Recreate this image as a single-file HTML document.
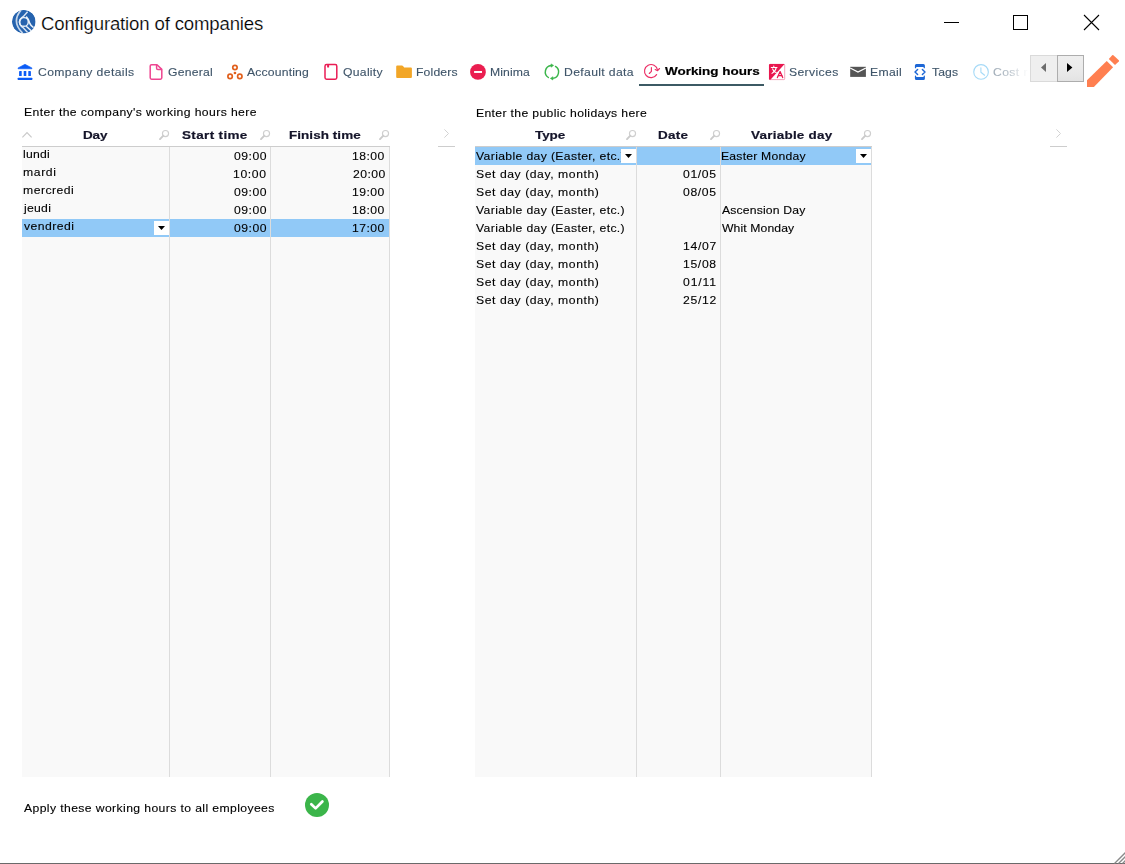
<!DOCTYPE html>
<html><head><meta charset="utf-8">
<style>
html,body{margin:0;padding:0;}
body{width:1125px;height:864px;position:relative;overflow:hidden;background:#fff;font-family:"Liberation Sans",sans-serif;}
.t{position:absolute;white-space:nowrap;transform:scaleX(1.06);transform-origin:0 0;}
.a{position:absolute;}
svg{position:absolute;left:0;top:0;overflow:visible;}
.grid{position:absolute;background:#f9f9f9;}
.vl{position:absolute;width:1px;background:#dcdcdc;}
.hl{position:absolute;height:1px;background:#cdcdcd;}
.sel{position:absolute;background:#91c9f7;height:18px;}
.dd{position:absolute;background:#fff;width:15px;height:14px;}
</style></head><body>

<!-- grids -->
<div class="grid" style="left:22px;top:147px;width:368px;height:630px;"></div>
<div class="grid" style="left:475px;top:147px;width:397px;height:630px;"></div>
<!-- selected rows -->
<div class="sel" style="left:22px;top:219px;width:368px;"></div>
<div class="sel" style="left:475px;top:147px;width:397px;"></div>
<!-- dropdown boxes -->
<!-- column lines -->
<div class="vl" style="left:169px;top:147px;height:630px;"></div>
<div class="vl" style="left:270px;top:147px;height:630px;"></div>
<div class="vl" style="left:389px;top:147px;height:630px;"></div>
<div class="vl" style="left:636px;top:147px;height:630px;"></div>
<div class="vl" style="left:720px;top:147px;height:630px;"></div>
<div class="vl" style="left:871px;top:147px;height:630px;"></div>
<!-- header lines -->
<div class="hl" style="left:22px;top:146px;width:368px;"></div>
<div class="hl" style="left:438px;top:146px;width:17px;"></div>
<div class="hl" style="left:475px;top:146px;width:397px;"></div>
<div class="hl" style="left:1050px;top:146px;width:17px;"></div>
<!-- tab underline -->
<div class="a" style="left:639px;top:84px;width:125px;height:2px;background:#3c5a64;"></div>
<!-- bottom border -->
<div class="a" style="left:0;top:863px;width:1125px;height:1px;background:#6a6a6a;"></div>

<svg width="1125" height="864" viewBox="0 0 1125 864">
<!--ICONS-->
<defs>
<filter id="b3" x="-20%" y="-20%" width="140%" height="140%"><feGaussianBlur stdDeviation="0.35"/></filter>
<filter id="b5" x="-20%" y="-20%" width="140%" height="140%"><feGaussianBlur stdDeviation="0.62"/></filter>
<clipPath id="logoclip"><circle cx="23.8" cy="21.7" r="11.8"/></clipPath>
<linearGradient id="fade" x1="993" y1="0" x2="1029" y2="0" gradientUnits="userSpaceOnUse"><stop offset="0" stop-color="#fff" stop-opacity="0"/><stop offset="0.45" stop-color="#fff" stop-opacity="0.35"/><stop offset="1" stop-color="#fff" stop-opacity="1"/></linearGradient>
<linearGradient id="btng" x1="0" y1="0" x2="0" y2="1"><stop offset="0" stop-color="#efefef"/><stop offset="0.5" stop-color="#ebebeb"/><stop offset="1" stop-color="#e3e3e3"/></linearGradient>
</defs>

<!-- app logo -->
<g filter="url(#b5)">
<g clip-path="url(#logoclip)">
<circle cx="23.8" cy="21.7" r="11.8" fill="#2563ae"/>
<path d="M20.8,10.5 Q11.2,21.8 22.6,33.2" fill="none" stroke="#dfe9f5" stroke-width="1.7" opacity="0.85"/>
<path d="M27.6,11.8 L23.4,16.4 Q19.5,19 19.5,22 Q19.6,25.6 23,27.6 L27.6,32.6" fill="none" stroke="#e6eef8" stroke-width="1.5" opacity="0.92"/>
<circle cx="23.9" cy="21.9" r="4.4" fill="none" stroke="#eaf1f9" stroke-width="1.5" opacity="0.95"/>
<path d="M26.2,16.6 Q29.2,19.6 29.9,23.6 Q31,26 33.6,27.6" fill="none" stroke="#eaf1f9" stroke-width="1.5"/>
<path d="M26.2,26.2 L31.8,31.2" fill="none" stroke="#eaf1f9" stroke-width="1.5"/>
</g>
</g>

<!-- window controls -->
<rect x="944" y="22" width="15" height="1" fill="#000"/>
<rect x="1013.5" y="15.5" width="14" height="14" fill="none" stroke="#000" stroke-width="1"/>
<path d="M1084,15 L1099,30 M1099,15 L1084,30" stroke="#000" stroke-width="1.1" fill="none"/>

<!-- tab icons -->
<!-- Company details (bank) -->
<g fill="#0b5cf6">
<path d="M24.97,64.3 L31.9,67.9 L31.9,68.8 L18.05,68.8 L18.05,67.9 Z" stroke="#0b5cf6" stroke-width="0.6" stroke-linejoin="round"/>
<rect x="19.1" y="71" width="2.6" height="5.1" rx="0.4"/>
<rect x="23.7" y="71" width="2.6" height="5.1" rx="0.4"/>
<rect x="28.3" y="71" width="2.6" height="5.1" rx="0.4"/>
<rect x="17.7" y="77.8" width="14.6" height="2.2" rx="0.5"/>
</g>
<!-- General (file) -->
<g fill="none" stroke="#ee4591" stroke-width="1.5" stroke-linejoin="round">
<path d="M151.6,64.7 H157 L161.8,69.4 V77.8 A1.4,1.4 0 0 1 160.4,79.2 H151.6 A1.4,1.4 0 0 1 150.2,77.8 V66.1 A1.4,1.4 0 0 1 151.6,64.7 Z"/>
<path d="M156.6,64.9 V68.2 A1.3,1.3 0 0 0 157.9,69.5 H161.6"/>
</g>
<!-- Accounting -->
<g fill="none" stroke="#e1601d" stroke-width="1.7">
<circle cx="234.95" cy="67.5" r="2.2"/>
<circle cx="230.1" cy="76.4" r="2.2"/>
<circle cx="239.8" cy="76.4" r="2.2"/>
</g>
<circle cx="234.95" cy="73" r="1.35" fill="#e1601d"/>
<!-- Quality -->
<rect x="325" y="64.6" width="11.8" height="14.6" rx="1.6" fill="none" stroke="#ea1d55" stroke-width="1.5"/>
<rect x="327.1" y="64.6" width="2" height="2.9" rx="0.5" fill="#ea1d55"/>
<!-- Folders -->
<path d="M397.2,65.6 H402 Q402.6,65.6 403,66.1 L404.2,67.4 H410.9 A1,1 0 0 1 411.9,68.4 V77.1 A1,1 0 0 1 410.9,78.1 H397.2 A1,1 0 0 1 396.2,77.1 V66.6 A1,1 0 0 1 397.2,65.6 Z" fill="#f2a627"/>
<!-- Minima -->
<circle cx="477.95" cy="71.95" r="7.9" fill="#ea1e50"/>
<rect x="474.1" y="71" width="7.9" height="1.95" fill="#fff"/>
<!-- Default data -->
<g fill="none" stroke="#3cb64c" stroke-width="1.45" stroke-linecap="round">
<path d="M548.4,77.5 A6.5,6.5 0 0 1 551.2,65.5"/>
<path d="M555.5,66.4 A6.5,6.5 0 0 1 552.7,78.4"/>
</g>
<path d="M551,63.9 L553.6,65.4 L551,67.2 Z" fill="#3cb64c" stroke="#3cb64c" stroke-width="0.6" stroke-linejoin="round"/>
<path d="M552.9,76.7 L550.4,78.4 L552.9,80 Z" fill="#3cb64c" stroke="#3cb64c" stroke-width="0.6" stroke-linejoin="round"/>
<!-- Working hours -->
<g fill="none" stroke="#ec2f66" stroke-width="1.15" stroke-linecap="round" stroke-linejoin="round">
<path d="M656.6,74.6 A6.55,6.55 0 1 1 657.5,70"/>
<path d="M655.2,69.5 L657.6,70.7 L659.5,68.5"/>
<path d="M651.4,67.6 V71.3 L649.3,73.5"/>
</g>
<!-- Services (translate) -->
<rect x="769.4" y="64.3" width="15.3" height="15.3" rx="0.8" fill="#fff" stroke="#f29ab3" stroke-width="0.9"/>
<path d="M769,65 A1,1 0 0 1 770,64 H784.6 L770.4,79.8 A1.2,1.2 0 0 1 769,79 Z" fill="#e9174f"/>
<g fill="none" stroke="#fff" stroke-width="1.05" stroke-linecap="round">
<path d="M771.3,67.4 H777"/>
<path d="M773.8,66 V67.2"/>
<path d="M772.6,68.9 Q774.5,72.6 776.2,72.4"/>
<path d="M776.2,67.6 Q775.8,71 772,73.4"/>
</g>
<g fill="none" stroke="#e9174f" stroke-width="1.25" stroke-linecap="round" stroke-linejoin="round">
<path d="M777.4,77.6 L780.1,71.6 L782.7,77.6"/>
<path d="M778.5,75.6 H781.8"/>
</g>
<!-- Email -->
<rect x="850.2" y="66.8" width="15.7" height="10.1" fill="#555"/>
<path d="M850.2,68 L858,72.1 L865.9,68" fill="none" stroke="#fff" stroke-width="1.25"/>
<!-- Tags -->
<g fill="#1d67d6">
<path d="M916.4,64 H923.4 A1.5,1.5 0 0 1 924.9,65.5 V67.7 A0.65,0.65 0 0 1 923.6,67.7 V66.9 H916.2 V67.7 A0.65,0.65 0 0 1 914.9,67.7 V65.5 A1.5,1.5 0 0 1 916.4,64 Z"/>
<path d="M916.4,79.9 H923.4 A1.5,1.5 0 0 0 924.9,78.4 V76.2 A0.65,0.65 0 0 0 923.6,76.2 V77 H916.2 V76.2 A0.65,0.65 0 0 0 914.9,76.2 V78.4 A1.5,1.5 0 0 0 916.4,79.9 Z"/>
</g>
<g fill="none" stroke="#1d67d6" stroke-width="1.45" stroke-linecap="round" stroke-linejoin="round">
<path d="M917.6,69.4 L915,71.95 L917.6,74.5"/>
<path d="M922.4,69.4 L925,71.95 L922.4,74.5"/>
</g>
<!-- Cost (faded clock) -->
<g fill="none" stroke="#a6daf7" stroke-width="1.1" stroke-linecap="round" stroke-linejoin="round">
<circle cx="981.05" cy="71.9" r="7.3"/>
<path d="M980.9,67.8 V72.2 L984.6,75.2"/>
</g>

<!-- scroll buttons -->
<rect x="1030.5" y="55.5" width="27" height="26" fill="#efefef" stroke="#dadada" stroke-width="1"/>
<rect x="1057.5" y="55.5" width="26" height="26" fill="url(#btng)" stroke="#adadad" stroke-width="1"/>
<path d="M1046,63 L1041,67.5 L1046,72 Z" fill="#6d6d6d"/>
<path d="M1067,63 L1072.4,67.5 L1067,72 Z" fill="#000"/>
<!-- pencil -->
<g fill="#ff7f50">
<path d="M1087,80.3 L1106.7,61.1 L1113.1,67.3 L1093.9,86.9 L1087,86.9 Z"/>
<path d="M1112.2,55.3 Q1112.8,54.8 1113.4,55.3 L1118.8,60.3 Q1119.3,60.9 1118.8,61.4 L1115,65.1 L1108.8,59 Z"/>
</g>

<!-- header icons -->
<g fill="none" stroke="#c9c9c9" stroke-width="1.15">
<path d="M22.4,137.3 L27,132.6 L31.6,137.3"/>
</g>

<g fill="none" stroke="#d3d3d3" stroke-width="1">
<path d="M444.4,129.4 L448.5,133.5 L444.4,137.6"/>
<path d="M1056.4,129.4 L1060.5,133.5 L1056.4,137.6"/>
</g>

<g fill="none" stroke="#cfcfcf" transform="translate(169.5,0)">
<circle cx="-4" cy="133.5" r="3.05" stroke-width="1.15"/>
<path d="M-6.4,135.9 L-9.5,139.1" stroke-width="1.9" stroke-linecap="round" stroke="#cbcbcb"/>
</g><g fill="none" stroke="#cfcfcf" transform="translate(270.5,0)">
<circle cx="-4" cy="133.5" r="3.05" stroke-width="1.15"/>
<path d="M-6.4,135.9 L-9.5,139.1" stroke-width="1.9" stroke-linecap="round" stroke="#cbcbcb"/>
</g><g fill="none" stroke="#cfcfcf" transform="translate(389.5,0)">
<circle cx="-4" cy="133.5" r="3.05" stroke-width="1.15"/>
<path d="M-6.4,135.9 L-9.5,139.1" stroke-width="1.9" stroke-linecap="round" stroke="#cbcbcb"/>
</g><g fill="none" stroke="#cfcfcf" transform="translate(636.5,0)">
<circle cx="-4" cy="133.5" r="3.05" stroke-width="1.15"/>
<path d="M-6.4,135.9 L-9.5,139.1" stroke-width="1.9" stroke-linecap="round" stroke="#cbcbcb"/>
</g><g fill="none" stroke="#cfcfcf" transform="translate(720.5,0)">
<circle cx="-4" cy="133.5" r="3.05" stroke-width="1.15"/>
<path d="M-6.4,135.9 L-9.5,139.1" stroke-width="1.9" stroke-linecap="round" stroke="#cbcbcb"/>
</g><g fill="none" stroke="#cfcfcf" transform="translate(871.5,0)">
<circle cx="-4" cy="133.5" r="3.05" stroke-width="1.15"/>
<path d="M-6.4,135.9 L-9.5,139.1" stroke-width="1.9" stroke-linecap="round" stroke="#cbcbcb"/>
</g>

<!-- check -->
<circle cx="317" cy="805" r="12" fill="#3bb54a"/>
<path d="M311.3,804.2 L315.6,808.4 L322.4,801.5" fill="none" stroke="#fff" stroke-width="2.7" stroke-linecap="round" stroke-linejoin="round"/>

<!-- resize grip -->
<g stroke="#8a8a8a" stroke-width="1.25" fill="none">
<path d="M1114.5,863.5 L1125.5,852.5"/>
<path d="M1118.5,863.5 L1125.5,856.5"/>
<path d="M1122.5,863.5 L1125.5,860.5"/>
</g>

</svg>

<div class="t" id="title" style="left:40.95px;top:10.56px;font-size:18.6px;line-height:26px;letter-spacing:-0.161px;color:#000;-webkit-text-stroke:0.2px #fff;transform:scaleX(1.0);">Configuration of companies</div>
<div class="t" id="t1" style="left:37.69px;top:64.02px;font-size:11.5px;line-height:16px;letter-spacing:0.355px;color:#3f5569;-webkit-text-stroke:0.12px #3f5569;transform:scaleX(1.06);">Company details</div>
<div class="t" id="t2" style="left:167.95px;top:64.02px;font-size:11.5px;line-height:16px;letter-spacing:0.223px;color:#3f5569;-webkit-text-stroke:0.12px #3f5569;transform:scaleX(1.06);">General</div>
<div class="t" id="t3" style="left:247.09px;top:64.02px;font-size:11.5px;line-height:16px;letter-spacing:0.158px;color:#3f5569;-webkit-text-stroke:0.12px #3f5569;transform:scaleX(1.06);">Accounting</div>
<div class="t" id="t4" style="left:343.19px;top:64.02px;font-size:11.5px;line-height:16px;letter-spacing:0.265px;color:#3f5569;-webkit-text-stroke:0.12px #3f5569;transform:scaleX(1.06);">Quality</div>
<div class="t" id="t5" style="left:415.71px;top:64.02px;font-size:11.5px;line-height:16px;letter-spacing:0.140px;color:#3f5569;-webkit-text-stroke:0.12px #3f5569;transform:scaleX(1.06);">Folders</div>
<div class="t" id="t6" style="left:489.56px;top:64.02px;font-size:11.5px;line-height:16px;letter-spacing:0.087px;color:#3f5569;-webkit-text-stroke:0.12px #3f5569;transform:scaleX(1.06);">Minima</div>
<div class="t" id="t7" style="left:563.50px;top:64.02px;font-size:11.5px;line-height:16px;letter-spacing:0.330px;color:#3f5569;-webkit-text-stroke:0.12px #3f5569;transform:scaleX(1.06);">Default data</div>
<div class="t" id="t8" style="left:664.65px;top:63.02px;font-size:11.5px;line-height:16px;letter-spacing:-0.005px;color:#000;font-weight:bold;-webkit-text-stroke:0.2px #000;transform:scaleX(1.17);">Working hours</div>
<div class="t" id="t9" style="left:789.49px;top:64.02px;font-size:11.5px;line-height:16px;letter-spacing:0.336px;color:#3f5569;-webkit-text-stroke:0.12px #3f5569;transform:scaleX(1.06);">Services</div>
<div class="t" id="t10" style="left:870.08px;top:64.02px;font-size:11.5px;line-height:16px;letter-spacing:0.306px;color:#3f5569;-webkit-text-stroke:0.12px #3f5569;transform:scaleX(1.06);">Email</div>
<div class="t" id="t11" style="left:932.39px;top:64.02px;font-size:11.5px;line-height:16px;letter-spacing:0.107px;color:#3f5569;-webkit-text-stroke:0.12px #3f5569;transform:scaleX(1.06);">Tags</div>
<div class="t" id="t12" style="left:993.13px;top:64.02px;font-size:11.5px;line-height:16px;letter-spacing:0.366px;color:#a3afba;-webkit-text-stroke:0.12px #a3afba;transform:scaleX(1.06);">Cost r</div>
<div class="t" id="l1" style="left:23.74px;top:104.02px;font-size:11.5px;line-height:16px;letter-spacing:0.375px;color:#000;-webkit-text-stroke:0.12px #000;transform:scaleX(1.06);">Enter the company&#x27;s working hours here</div>
<div class="t" id="l2" style="left:476.37px;top:105.02px;font-size:11.5px;line-height:16px;letter-spacing:0.330px;color:#000;-webkit-text-stroke:0.12px #000;transform:scaleX(1.06);">Enter the public holidays here</div>
<div class="t" id="l3" style="left:23.95px;top:800.02px;font-size:11.5px;line-height:16px;letter-spacing:0.366px;color:#000;-webkit-text-stroke:0.12px #000;transform:scaleX(1.06);">Apply these working hours to all employees</div>
<div class="t" id="h1" style="left:83.25px;top:127.02px;font-size:11.5px;line-height:16px;letter-spacing:-0.109px;color:#15152a;font-weight:bold;-webkit-text-stroke:0.2px #15152a;transform:scaleX(1.17);">Day</div>
<div class="t" id="h2" style="left:182.27px;top:127.02px;font-size:11.5px;line-height:16px;letter-spacing:0.312px;color:#15152a;font-weight:bold;-webkit-text-stroke:0.2px #15152a;transform:scaleX(1.17);">Start time</div>
<div class="t" id="h3" style="left:289.41px;top:127.02px;font-size:11.5px;line-height:16px;letter-spacing:0.053px;color:#15152a;font-weight:bold;-webkit-text-stroke:0.2px #15152a;transform:scaleX(1.17);">Finish time</div>
<div class="t" id="h4" style="left:535.24px;top:127.02px;font-size:11.5px;line-height:16px;letter-spacing:-0.044px;color:#15152a;font-weight:bold;-webkit-text-stroke:0.2px #15152a;transform:scaleX(1.17);">Type</div>
<div class="t" id="h5" style="left:658.20px;top:127.02px;font-size:11.5px;line-height:16px;letter-spacing:0.264px;color:#15152a;font-weight:bold;-webkit-text-stroke:0.2px #15152a;transform:scaleX(1.17);">Date</div>
<div class="t" id="h6" style="left:750.90px;top:127.02px;font-size:11.5px;line-height:16px;letter-spacing:0.213px;color:#15152a;font-weight:bold;-webkit-text-stroke:0.2px #15152a;transform:scaleX(1.17);">Variable day</div>
<div class="t" id="d0" style="left:23.35px;top:146.02px;font-size:11.5px;line-height:16px;letter-spacing:0.250px;color:#000;-webkit-text-stroke:0.12px #000;transform:scaleX(1.06);">lundi</div>
<div class="t" id="s0" style="left:233.57px;top:148.02px;font-size:11.5px;line-height:16px;letter-spacing:0.458px;color:#000;-webkit-text-stroke:0.12px #000;transform:scaleX(1.06);">09:00</div>
<div class="t" id="f0" style="left:352.45px;top:148.02px;font-size:11.5px;line-height:16px;letter-spacing:0.440px;color:#000;-webkit-text-stroke:0.12px #000;transform:scaleX(1.06);">18:00</div>
<div class="t" id="d1" style="left:23.35px;top:164.02px;font-size:11.5px;line-height:16px;letter-spacing:0.576px;color:#000;-webkit-text-stroke:0.12px #000;transform:scaleX(1.06);">mardi</div>
<div class="t" id="s1" style="left:232.87px;top:166.02px;font-size:11.5px;line-height:16px;letter-spacing:0.583px;color:#000;-webkit-text-stroke:0.12px #000;transform:scaleX(1.06);">10:00</div>
<div class="t" id="f1" style="left:352.53px;top:166.02px;font-size:11.5px;line-height:16px;letter-spacing:0.418px;color:#000;-webkit-text-stroke:0.12px #000;transform:scaleX(1.06);">20:00</div>
<div class="t" id="d2" style="left:23.35px;top:182.02px;font-size:11.5px;line-height:16px;letter-spacing:0.460px;color:#000;-webkit-text-stroke:0.12px #000;transform:scaleX(1.06);">mercredi</div>
<div class="t" id="s2" style="left:233.57px;top:184.02px;font-size:11.5px;line-height:16px;letter-spacing:0.458px;color:#000;-webkit-text-stroke:0.12px #000;transform:scaleX(1.06);">09:00</div>
<div class="t" id="f2" style="left:352.45px;top:184.02px;font-size:11.5px;line-height:16px;letter-spacing:0.440px;color:#000;-webkit-text-stroke:0.12px #000;transform:scaleX(1.06);">19:00</div>
<div class="t" id="d3" style="left:24.28px;top:200.02px;font-size:11.5px;line-height:16px;letter-spacing:0.267px;color:#000;-webkit-text-stroke:0.12px #000;transform:scaleX(1.06);">jeudi</div>
<div class="t" id="s3" style="left:233.57px;top:202.02px;font-size:11.5px;line-height:16px;letter-spacing:0.458px;color:#000;-webkit-text-stroke:0.12px #000;transform:scaleX(1.06);">09:00</div>
<div class="t" id="f3" style="left:352.45px;top:202.02px;font-size:11.5px;line-height:16px;letter-spacing:0.440px;color:#000;-webkit-text-stroke:0.12px #000;transform:scaleX(1.06);">18:00</div>
<div class="t" id="d4" style="left:23.65px;top:218.02px;font-size:11.5px;line-height:16px;letter-spacing:0.415px;color:#000;-webkit-text-stroke:0.12px #000;transform:scaleX(1.06);">vendredi</div>
<div class="t" id="s4" style="left:233.57px;top:220.02px;font-size:11.5px;line-height:16px;letter-spacing:0.458px;color:#000;-webkit-text-stroke:0.12px #000;transform:scaleX(1.06);">09:00</div>
<div class="t" id="f4" style="left:352.45px;top:220.02px;font-size:11.5px;line-height:16px;letter-spacing:0.440px;color:#000;-webkit-text-stroke:0.12px #000;transform:scaleX(1.06);">17:00</div>
<div class="t" id="ra0" style="left:476.21px;top:148.02px;font-size:11.5px;line-height:16px;letter-spacing:0.337px;color:#000;-webkit-text-stroke:0.12px #000;transform:scaleX(1.06);">Variable day (Easter, etc.)</div>
<div class="t" id="rc0" style="left:721.37px;top:148.02px;font-size:11.5px;line-height:16px;letter-spacing:0.197px;color:#000;-webkit-text-stroke:0.12px #000;transform:scaleX(1.06);">Easter Monday</div>
<div class="t" id="ra1" style="left:475.62px;top:166.02px;font-size:11.5px;line-height:16px;letter-spacing:0.524px;color:#000;-webkit-text-stroke:0.12px #000;transform:scaleX(1.06);">Set day (day, month)</div>
<div class="t" id="rb1" style="left:683.36px;top:166.02px;font-size:11.5px;line-height:16px;letter-spacing:0.578px;color:#000;-webkit-text-stroke:0.12px #000;transform:scaleX(1.06);">01/05</div>
<div class="t" id="ra2" style="left:475.62px;top:184.02px;font-size:11.5px;line-height:16px;letter-spacing:0.524px;color:#000;-webkit-text-stroke:0.12px #000;transform:scaleX(1.06);">Set day (day, month)</div>
<div class="t" id="rb2" style="left:683.36px;top:184.02px;font-size:11.5px;line-height:16px;letter-spacing:0.578px;color:#000;-webkit-text-stroke:0.12px #000;transform:scaleX(1.06);">08/05</div>
<div class="t" id="ra3" style="left:476.21px;top:202.02px;font-size:11.5px;line-height:16px;letter-spacing:0.337px;color:#000;-webkit-text-stroke:0.12px #000;transform:scaleX(1.06);">Variable day (Easter, etc.)</div>
<div class="t" id="rc3" style="left:722.26px;top:202.02px;font-size:11.5px;line-height:16px;letter-spacing:0.156px;color:#000;-webkit-text-stroke:0.12px #000;transform:scaleX(1.06);">Ascension Day</div>
<div class="t" id="ra4" style="left:476.21px;top:220.02px;font-size:11.5px;line-height:16px;letter-spacing:0.337px;color:#000;-webkit-text-stroke:0.12px #000;transform:scaleX(1.06);">Variable day (Easter, etc.)</div>
<div class="t" id="rc4" style="left:722.27px;top:220.02px;font-size:11.5px;line-height:16px;letter-spacing:0.095px;color:#000;-webkit-text-stroke:0.12px #000;transform:scaleX(1.06);">Whit Monday</div>
<div class="t" id="ra5" style="left:475.62px;top:238.02px;font-size:11.5px;line-height:16px;letter-spacing:0.524px;color:#000;-webkit-text-stroke:0.12px #000;transform:scaleX(1.06);">Set day (day, month)</div>
<div class="t" id="rb5" style="left:682.66px;top:238.02px;font-size:11.5px;line-height:16px;letter-spacing:0.644px;color:#000;-webkit-text-stroke:0.12px #000;transform:scaleX(1.06);">14/07</div>
<div class="t" id="ra6" style="left:475.62px;top:256.02px;font-size:11.5px;line-height:16px;letter-spacing:0.524px;color:#000;-webkit-text-stroke:0.12px #000;transform:scaleX(1.06);">Set day (day, month)</div>
<div class="t" id="rb6" style="left:682.66px;top:256.02px;font-size:11.5px;line-height:16px;letter-spacing:0.617px;color:#000;-webkit-text-stroke:0.12px #000;transform:scaleX(1.06);">15/08</div>
<div class="t" id="ra7" style="left:475.62px;top:274.02px;font-size:11.5px;line-height:16px;letter-spacing:0.524px;color:#000;-webkit-text-stroke:0.12px #000;transform:scaleX(1.06);">Set day (day, month)</div>
<div class="t" id="rb7" style="left:683.36px;top:274.02px;font-size:11.5px;line-height:16px;letter-spacing:0.816px;color:#000;-webkit-text-stroke:0.12px #000;transform:scaleX(1.06);">01/11</div>
<div class="t" id="ra8" style="left:475.62px;top:292.02px;font-size:11.5px;line-height:16px;letter-spacing:0.524px;color:#000;-webkit-text-stroke:0.12px #000;transform:scaleX(1.06);">Set day (day, month)</div>
<div class="t" id="rb8" style="left:683.14px;top:292.02px;font-size:11.5px;line-height:16px;letter-spacing:0.631px;color:#000;-webkit-text-stroke:0.12px #000;transform:scaleX(1.06);">25/12</div>
<!-- overlays above text -->
<div class="dd" style="left:154px;top:221px;"></div>
<div class="dd" style="left:621px;top:149px;"></div>
<div class="dd" style="left:856px;top:149px;"></div>
<svg width="1125" height="864" viewBox="0 0 1125 864">
<!-- dropdown triangles -->
<path d="M158,226 H165 L161.5,230 Z" fill="#000"/>
<path d="M625,154 H632 L628.5,158 Z" fill="#000"/>
<path d="M860,154 H867 L863.5,158 Z" fill="#000"/>
</svg>
<div class="a" style="left:996px;top:62px;width:33px;height:20px;background:linear-gradient(90deg,rgba(255,255,255,0) 0%,rgba(255,255,255,0.3) 45%,rgba(255,255,255,0.8) 78%,#fff 100%);"></div>

</body></html>
